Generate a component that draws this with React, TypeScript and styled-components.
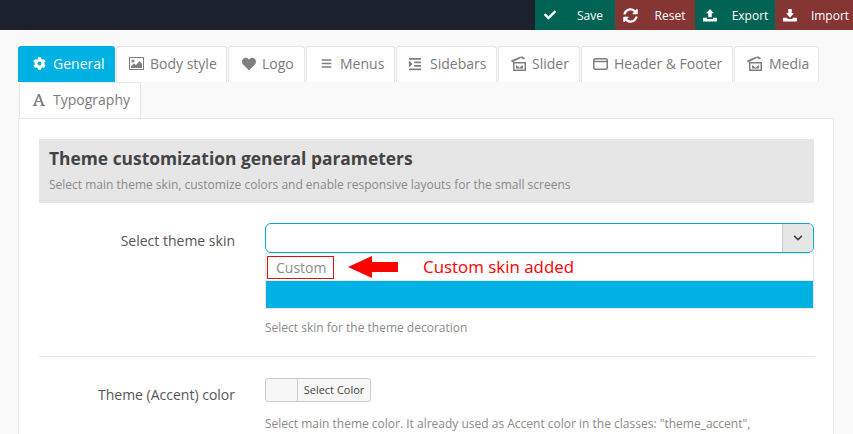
import React from 'react';
import styled, { createGlobalStyle } from 'styled-components';
import { FaCheck, FaHeart, FaBars, FaIndent, FaChevronDown, FaCog, FaSyncAlt } from 'react-icons/fa';

const Global = createGlobalStyle`
  html, body { margin: 0; padding: 0; background: #f9f9f9; }
  body { width: 853px; height: 434px; overflow: hidden; font-family: "Open Sans", "Liberation Sans", sans-serif; }
`;

const Page = styled.div`
  width: 853px;
  height: 434px;
  overflow: hidden;
  display: flex;
  flex-direction: column;
`;

const TopBar = styled.header`
  height: 30px;
  flex: none;
  background: #1b222d;
  display: flex;
  justify-content: flex-end;
`;

const ActionButton = styled.div<{ $tone: 'green' | 'red' }>`
  width: 80px;
  height: 30px;
  flex: none;
  display: grid;
  grid-template-columns: 30px 50px;
  align-items: center;
  justify-items: center;
  background: ${p => (p.$tone === 'green' ? '#006353' : '#843534')};
  color: #fff;
  font-size: 12px;
  &:last-child { width: 78px; }
`;

const Main = styled.main`
  padding: 16px 19px 0 18px;
  flex: 1;
  min-height: 0;
`;

const TabRow = styled.nav`
  display: flex;
  flex-wrap: wrap;
  column-gap: 1px;
  width: 816px;
`;

const Tab = styled.div<{ $active?: boolean; $w: number; $pad: number }>`
  width: ${p => p.$w}px;
  height: 36px;
  box-sizing: border-box;
  display: flex;
  align-items: center;
  padding: 0 0 2px ${p => p.$pad}px;
  font-size: 14px;
  white-space: nowrap;
  border-radius: 3px 3px 0 0;
  background: ${p => (p.$active ? '#00b2e3' : '#fff')};
  color: ${p => (p.$active ? '#fff' : '#7b7b7b')};
  border: 1px solid ${p => (p.$active ? '#00b2e3' : '#e6e6e6')};
  border-bottom: none;
`;

const TabIcon = styled.span<{ $w: number }>`
  width: ${p => p.$w}px;
  flex: none;
  display: flex;
  align-items: center;
  color: inherit;
`;

const TypoTab = styled(Tab)`
  margin-left: 1px;
`;

const Panel = styled.section`
  background: #fff;
  border: 1px solid #e6e6e6;
  padding: 20px 19px 0 20px;
  height: 320px;
  box-sizing: border-box;
  width: 816px;
`;

const Intro = styled.div`
  background: #e6e6e6;
  height: 64px;
  box-sizing: border-box;
  padding: 7px 10px 0;
`;

const Title = styled.h2`
  margin: 0;
  font-size: 17.4px;
  line-height: 24px;
  font-weight: 700;
  color: #444;
  white-space: nowrap;
`;

const Sub = styled.p`
  margin: 7px 0 0;
  font-size: 12px;
  line-height: 16px;
  color: #8a8a8a;
  white-space: nowrap;
`;

const Field = styled.div<{ $top: number }>`
  display: grid;
  grid-template-columns: 196px 549px;
  column-gap: 30px;
  padding-top: ${p => p.$top}px;
`;

const Label = styled.label<{ $top: number }>`
  font-size: 14px;
  line-height: 20px;
  color: #555;
  text-align: right;
  padding-top: ${p => p.$top}px;
`;

const SkinSelect = styled.div`
  position: relative;
  width: 549px;
`;

const SelectBox = styled.div`
  height: 30px;
  box-sizing: border-box;
  background: #fff;
  border: 1px solid #00a9d4;
  border-radius: 6px;
  display: flex;
  justify-content: flex-end;
  overflow: hidden;
`;

const Caret = styled.div`
  width: 30px;
  background: #e6e6e6;
  border-left: 1px solid #ccc;
  display: flex;
  align-items: center;
  justify-content: center;
  color: #444;
`;

const Dropdown = styled.div`
  border: 1px solid #e6e6e6;
`;

const Option = styled.div`
  height: 26px;
  padding-left: 10px;
  font-size: 14px;
  line-height: 28px;
  color: #8c8c8c;
  background: #fff;
`;

const SelectedOption = styled.div`
  height: 27px;
  background: #00b2e3;
  border-top: 1px solid #e6e6e6;
`;

const RedBox = styled.div`
  position: absolute;
  left: 2px;
  top: 33px;
  width: 67px;
  height: 23px;
  box-sizing: border-box;
  border: 1px solid #d11;
`;

const Arrow = styled.svg`
  position: absolute;
  left: 83px;
  top: 33px;
`;

const Note = styled.span`
  position: absolute;
  left: 158px;
  top: 33px;
  font-size: 16.9px;
  line-height: 22px;
  color: #f00;
  white-space: nowrap;
`;

const Help = styled.p<{ $top: number }>`
  margin: ${p => p.$top}px 0 0;
  font-size: 12px;
  line-height: 16px;
  color: #8a8a8a;
  white-space: nowrap;
`;

const Divider = styled.hr`
  border: none;
  border-top: 1px solid #e6e6e6;
  margin: 20px -1px 0 0;
`;

const ColorButton = styled.div`
  width: 106px;
  height: 24px;
  box-sizing: border-box;
  display: flex;
  border: 1px solid #ccc;
  border-radius: 3px;
  background: #f7f7f7;
`;

const Swatch = styled.div`
  width: 31px;
  border-right: 1px solid #ccc;
`;

const ColorText = styled.span`
  flex: 1;
  text-align: center;
  font-size: 11px;
  line-height: 22px;
  color: #444;
  white-space: nowrap;
`;

const Clapper = () => (
  <svg width="16" height="15" viewBox="0 0 16 15" fill="#7f7f7f">
    <path d="M2 6h13v9H2zM3.500 7.500v6h10v-6z" fillRule="evenodd" />
    <path d="M0 4.500L9.500.5 10 2 1 6.500zM10.500 0L14 2l-1 1.500-3-1.500z" />
    <path d="M5 9l3.500 2.500L12 9v3.500H5z" />
  </svg>
);

const WindowIcon = () => (
  <svg width="15" height="14" viewBox="0 0 15 14" fill="none" stroke="#7f7f7f">
    <rect x=".75" y="1.750" width="13.5" height="10.5" rx="1.5" strokeWidth="1.5" />
    <path d="M1 4.500h13" strokeWidth="1.5" />
  </svg>
);

const PictureIcon = () => (
  <svg width="15" height="13" viewBox="0 0 15 13" fill="#7f7f7f">
    <path d="M0 0h15v13H0zM1 1v11h13V1z" fillRule="evenodd" />
    <circle cx="4" cy="4" r="1.500" />
    <path d="M2 11V9l3-2.500 2 1.500 3.500-4L13 7v4z" />
  </svg>
);

const SerifA = () => (
  <svg width="14" height="12" viewBox="0 0 14 12" fill="#7f7f7f">
    <path fillRule="evenodd" d="M6 0h1.800l3.900 10.500 1.300.4V12H8.500v-1.100l1.100-.4-.8-2.500H4.500l-.8 2.500 1.200.4V12H.800v-1.100l1.100-.4zM6.600 2.300L5 7h3.300z" />
  </svg>
);

const UploadIcon = () => (
  <svg width="14" height="13" viewBox="0 0 16 15" fill="#fff">
    <path d="M8 0l4.500 5H10v4.500H6V5H3.500z" />
    <path d="M0 10h4.500v1.500h7V10H16v4.500H0z" />
  </svg>
);

const DownloadIcon = () => (
  <svg width="14" height="13" viewBox="0 0 16 15" fill="#fff">
    <path d="M6 0h4v5h2.500L8 10 3.500 5H6z" />
    <path d="M0 10h4.500l1 1.500h5l1-1.500H16v4.500H0z" />
  </svg>
);

const tabs: { label: string; w: number; pad: number; slot: number; icon: React.ReactNode; active?: boolean }[] = [
  { label: 'General', w: 97, pad: 14, slot: 20, icon: <FaCog size={13} />, active: true },
  { label: 'Body style', w: 111, pad: 12, slot: 21, icon: <PictureIcon /> },
  { label: 'Logo', w: 77, pad: 13, slot: 20, icon: <FaHeart size={14} color="#7f7f7f" /> },
  { label: 'Menus', w: 89, pad: 14, slot: 19, icon: <FaBars size={11} color="#7f7f7f" /> },
  { label: 'Sidebars', w: 101, pad: 11, slot: 22, icon: <FaIndent size={14} color="#7f7f7f" /> },
  { label: 'Slider', w: 82, pad: 12, slot: 21, icon: <Clapper /> },
  { label: 'Header & Footer', w: 152, pad: 11, slot: 21, icon: <WindowIcon /> },
  { label: 'Media', w: 85, pad: 12, slot: 22, icon: <Clapper /> },
];

export default function App() {
  return (
    <Page>
      <Global />
      <TopBar>
        <ActionButton $tone="green"><FaCheck size={12} /><span>Save</span></ActionButton>
        <ActionButton $tone="red"><FaSyncAlt size={15} /><span>Reset</span></ActionButton>
        <ActionButton $tone="green"><UploadIcon /><span>Export</span></ActionButton>
        <ActionButton $tone="red"><DownloadIcon /><span>Import</span></ActionButton>
      </TopBar>
      <Main>
        <TabRow>
          {tabs.map(t => (
            <Tab key={t.label} $w={t.w} $pad={t.pad} $active={t.active}>
              <TabIcon $w={t.slot}>{t.icon}</TabIcon>
              {t.label}
            </Tab>
          ))}
          <TypoTab $w={122} $pad={12}>
            <TabIcon $w={21}><SerifA /></TabIcon>
            Typography
          </TypoTab>
        </TabRow>
        <Panel>
          <Intro>
            <Title>Theme customization general parameters</Title>
            <Sub>Select main theme skin, customize colors and enable responsive layouts for the small screens</Sub>
          </Intro>
          <Field $top={20}>
            <Label $top={8}>Select theme skin</Label>
            <div>
              <SkinSelect>
                <SelectBox>
                  <Caret><FaChevronDown size={10} /></Caret>
                </SelectBox>
                <Dropdown>
                  <Option>Custom</Option>
                  <SelectedOption />
                </Dropdown>
                <RedBox />
                <Arrow width="50" height="22" viewBox="0 0 50 22">
                  <path d="M0 11L24 0v6h26v10H24v6z" fill="#f00" />
                </Arrow>
                <Note>Custom skin added</Note>
              </SkinSelect>
              <Help $top={11}>Select skin for the theme decoration</Help>
            </div>
          </Field>
          <Divider />
          <Field $top={21}>
            <Label $top={7}>Theme (Accent) color</Label>
            <div>
              <ColorButton>
                <Swatch />
                <ColorText>Select Color</ColorText>
              </ColorButton>
              <Help $top={14}>Select main theme color. It already used as Accent color in the classes: "theme_accent",</Help>
            </div>
          </Field>
        </Panel>
      </Main>
    </Page>
  );
}
